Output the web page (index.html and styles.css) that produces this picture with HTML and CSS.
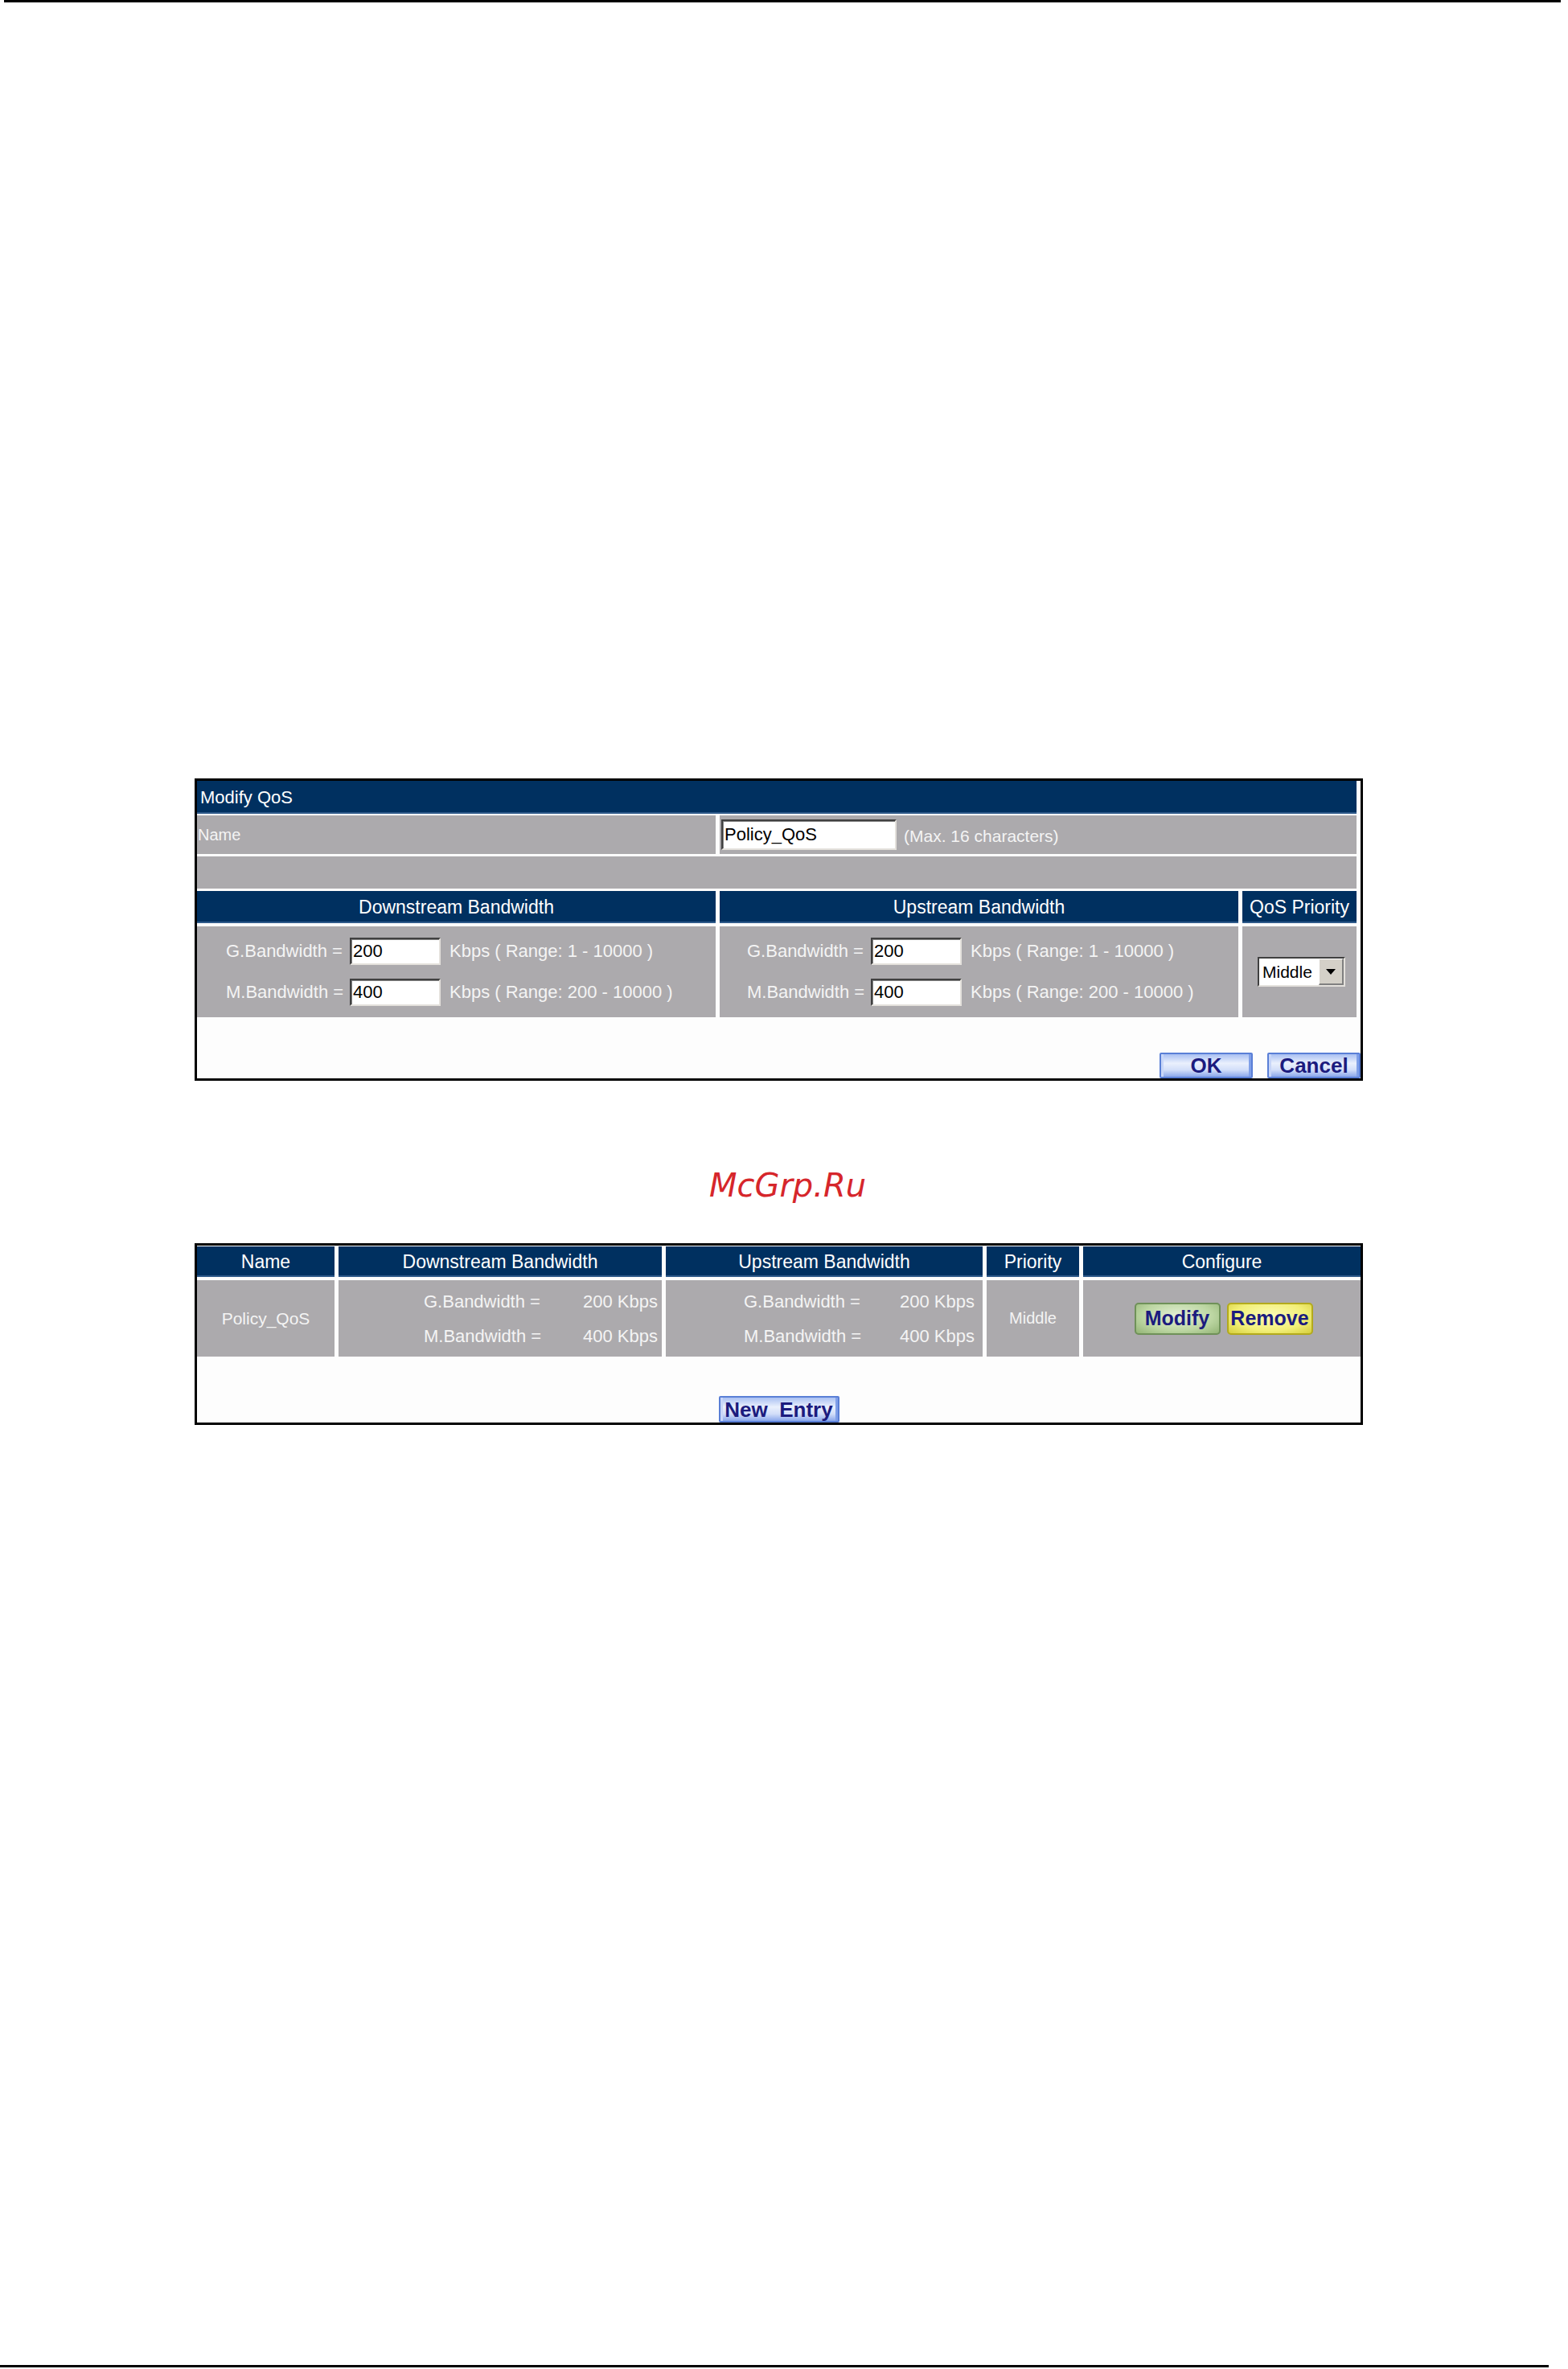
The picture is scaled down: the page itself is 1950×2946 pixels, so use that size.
FILE: index.html
```html
<!DOCTYPE html>
<html>
<head>
<meta charset="utf-8">
<title>Modify QoS</title>
<link rel="stylesheet" href="styles.css">
</head>
<body>
<div class="rule rule-top"></div>

<section class="panel panel-modify">
  <div class="bar title">Modify QoS</div>
  <div class="row row-name">
    <div class="cell cell-label">Name</div>
    <div class="cell cell-field">
      <input class="input input-name" type="text" value="Policy_QoS" readonly>
      <span class="hint">(Max. 16 characters)</span>
    </div>
  </div>
  <div class="row row-blank"><div class="cell"></div></div>
  <div class="row row-3 row-head">
    <div class="bar">Downstream Bandwidth</div>
    <div class="bar">Upstream Bandwidth</div>
    <div class="bar">QoS Priority</div>
  </div>
  <div class="row row-3 row-data">
    <div class="cell bw">
      <div class="bw-line"><span class="bw-label">G.Bandwidth =</span><input class="input input-num" type="text" value="200" readonly><span class="bw-unit">Kbps ( Range: 1 - 10000 )</span></div>
      <div class="bw-line"><span class="bw-label">M.Bandwidth =</span><input class="input input-num" type="text" value="400" readonly><span class="bw-unit">Kbps ( Range: 200 - 10000 )</span></div>
    </div>
    <div class="cell bw bw-up">
      <div class="bw-line"><span class="bw-label">G.Bandwidth =</span><input class="input input-num" type="text" value="200" readonly><span class="bw-unit">Kbps ( Range: 1 - 10000 )</span></div>
      <div class="bw-line"><span class="bw-label">M.Bandwidth =</span><input class="input input-num" type="text" value="400" readonly><span class="bw-unit">Kbps ( Range: 200 - 10000 )</span></div>
    </div>
    <div class="cell prio">
      <div class="select"><span class="select-value">Middle</span><span class="select-arrow"></span></div>
    </div>
  </div>
  <div class="actions">
    <button class="btn btn-blue btn-ok" type="button">OK</button>
    <button class="btn btn-blue btn-cancel" type="button">Cancel</button>
  </div>
</section>

<div class="watermark">McGrp.Ru</div>

<section class="panel panel-list">
  <div class="grid5 list-head">
    <div class="bar">Name</div>
    <div class="bar">Downstream Bandwidth</div>
    <div class="bar">Upstream Bandwidth</div>
    <div class="bar">Priority</div>
    <div class="bar">Configure</div>
  </div>
  <div class="grid5 list-data">
    <div class="cell center">Policy_QoS</div>
    <div class="cell pair-cell">
      <div class="pair">
        <span>G.Bandwidth =</span><span>200 Kbps</span>
        <span>M.Bandwidth =</span><span>400 Kbps</span>
      </div>
    </div>
    <div class="cell pair-cell pair-cell-up">
      <div class="pair">
        <span>G.Bandwidth =</span><span>200 Kbps</span>
        <span>M.Bandwidth =</span><span>400 Kbps</span>
      </div>
    </div>
    <div class="cell center prio-text">Middle</div>
    <div class="cell center configure">
      <button class="btn btn-small btn-green" type="button">Modify</button>
      <button class="btn btn-small btn-yellow" type="button">Remove</button>
    </div>
  </div>
  <div class="list-actions">
    <button class="btn btn-blue btn-new" type="button">New&nbsp; Entry</button>
  </div>
</section>

<div class="rule rule-bottom"></div>
</body>
</html>
```

FILE: styles.css
```css
* { box-sizing: border-box; }

html, body {
  margin: 0;
  padding: 0;
  background: #ffffff;
}

body {
  width: 1950px;
  height: 2946px;
  overflow: hidden;
  font-family: "Liberation Sans", Arial, sans-serif;
  color: #000;
}

.rule {
  height: 3px;
  background: #000;
}
.rule-top {
  margin-left: 5px;
  width: 1936px;
}
.rule-bottom {
  width: 1926px;
  margin-top: 1169px;
}

/* ---------- panels ---------- */
.panel {
  margin-left: 242px;
  width: 1453px;
  border: 3px solid #000;
  background: #fdfdfd;
}
.panel-modify {
  margin-top: 965px;
}

.bar {
  background: #003060;
  color: #ffffff;
  font-size: 23px;
  display: flex;
  align-items: center;
  justify-content: center;
  white-space: nowrap;
  box-shadow: inset 0 -2px 0 #2f5a8a;
}

.cell {
  background: #acaaad;
  color: #f4f4f4;
  font-size: 22px;
  white-space: nowrap;
}

.title {
  width: 1442px;
  height: 41px;
  justify-content: flex-start;
  padding-left: 4px;
  font-size: 22px;
}

.row {
  display: grid;
  width: 1442px;
  column-gap: 5px;
}
.row-name {
  margin-top: 2px;
  height: 48px;
  grid-template-columns: 645px 792px;
}
.cell-label {
  display: flex;
  align-items: center;
  padding-left: 1px;
  font-size: 20px;
}
.cell-field {
  display: flex;
  align-items: center;
  padding-left: 2px;
  gap: 9px;
}
.hint {
  font-size: 21px;
  padding-top: 4px;
}

.row-blank {
  margin-top: 3px;
  height: 40px;
  grid-template-columns: 1fr;
}
.row-3 {
  grid-template-columns: 645px 645px 142px;
}
.row-head {
  margin-top: 3px;
  height: 40px;
}
.row-data {
  margin-top: 4px;
  height: 113px;
}

/* ---------- bandwidth cells ---------- */
.bw {
  display: flex;
  flex-direction: column;
  justify-content: center;
  gap: 17px;
  padding-left: 36px;
}
.bw-up {
  padding-left: 34px;
}
.bw-line {
  display: flex;
  align-items: center;
  height: 34px;
}
.bw-label {
  width: 154px;
}
.bw-unit {
  margin-left: 11px;
}

/* ---------- form controls ---------- */
.input {
  display: block;
  margin: 0;
  background: #ffffff;
  color: #000;
  font-family: "Liberation Sans", Arial, sans-serif;
  font-size: 22px;
  padding: 0 0 0 2px;
  border-top: 2px solid #404040;
  border-left: 2px solid #404040;
  border-right: 2px solid #e4e1dc;
  border-bottom: 2px solid #e4e1dc;
  box-shadow: inset 1px 1px 0 #808080;
  outline: none;
}
.input-name {
  width: 218px;
  height: 38px;
}
.input-num {
  width: 113px;
  height: 34px;
}

.prio {
  display: flex;
  align-items: center;
  justify-content: center;
  padding-left: 5px;
}
.select {
  width: 109px;
  height: 37px;
  display: flex;
  align-items: stretch;
  background: #ffffff;
  border-top: 2px solid #404040;
  border-left: 2px solid #404040;
  border-right: 2px solid #e4e1dc;
  border-bottom: 2px solid #e4e1dc;
}
.select-value {
  flex: 1;
  display: flex;
  align-items: center;
  padding-left: 4px;
  color: #000;
  font-size: 21px;
}
.select-arrow {
  width: 31px;
  background: #d4d0c8;
  border-top: 1px solid #ffffff;
  border-left: 1px solid #ffffff;
  border-right: 2px solid #808080;
  border-bottom: 2px solid #808080;
  display: flex;
  align-items: center;
  justify-content: center;
}
.select-arrow::after {
  content: "";
  width: 0;
  height: 0;
  border-left: 6px solid transparent;
  border-right: 6px solid transparent;
  border-top: 7px solid #000;
}

/* ---------- buttons ---------- */
.btn {
  margin: 0;
  padding: 0;
  display: flex;
  align-items: center;
  justify-content: center;
  font-family: "Liberation Sans Narrow", "Liberation Sans", Arial, sans-serif;
  font-weight: bold;
  font-size: 26px;
  line-height: 1;
  color: #1b1b7e;
  cursor: default;
}
.btn-blue {
  height: 32px;
  border: 2px solid #5a7fd6;
  border-radius: 2px;
  background: linear-gradient(180deg, #a9c0f2 0%, #eaf0fd 40%, #d2def9 70%, #8aa7eb 100%);
  box-shadow: inset 3px 0 0 #c8d6f8, inset -3px 0 0 #7f9fe8;
}
.btn-ok {
  width: 116px;
}
.btn-cancel {
  width: 116px;
}
.actions {
  display: flex;
  justify-content: flex-end;
  gap: 18px;
  margin-top: 44px;
  padding-right: 0;
}

.watermark {
  margin-top: 108px;
  padding-left: 9px;
  text-align: center;
  font-family: "DejaVu Sans", sans-serif;
  font-style: italic;
  font-size: 40px;
  line-height: 44px;
  color: #d6262b;
}

/* ---------- list panel ---------- */
.panel-list {
  margin-top: 50px;
}
.grid5 {
  display: grid;
  grid-template-columns: 171px 402px 394px 115px 345px;
  column-gap: 5px;
}
.list-head {
  margin-top: 1px;
  height: 38px;
}
.list-data {
  margin-top: 4px;
  height: 95px;
}
.center {
  display: flex;
  align-items: center;
  justify-content: center;
  font-size: 21px;
}
.prio-text {
  font-size: 20px;
}
.pair-cell {
  display: flex;
  align-items: center;
}
.pair {
  display: grid;
  grid-template-columns: auto auto;
  justify-content: space-between;
  row-gap: 20px;
  width: 291px;
  margin-left: auto;
  margin-right: 5px;
  font-size: 22px;
  line-height: 23px;
}
.pair-cell-up .pair {
  width: 287px;
  margin-right: 10px;
}
.configure {
  gap: 8px;
  padding-left: 4px;
}
.btn-small {
  width: 107px;
  height: 40px;
  border-radius: 5px;
  font-size: 25px;
}
.btn-green {
  border: 2px solid #6f9159;
  background: radial-gradient(ellipse at 50% 40%, #e4f0d6 0%, #bcd6a2 60%, #93b476 100%);
}
.btn-yellow {
  border: 2px solid #b3aa1c;
  background: radial-gradient(ellipse at 50% 40%, #fcfcb8 0%, #f2ef78 60%, #d6cf3c 100%);
}
.list-actions {
  display: flex;
  justify-content: center;
  margin-top: 49px;
}
.btn-new {
  width: 150px;
  height: 33px;
}
```
